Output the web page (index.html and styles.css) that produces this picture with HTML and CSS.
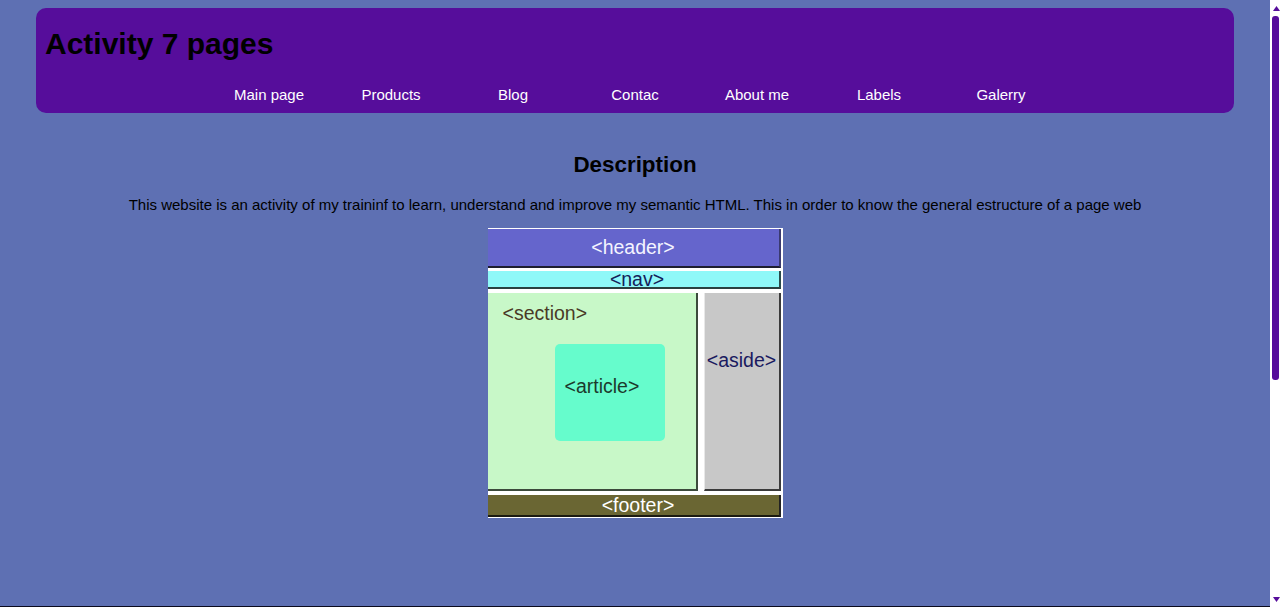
FILE: index.html
```html
<!DOCTYPE html>
<html lang="en">
<head>
<meta charset="utf-8">
<title>Activity 7 pages</title>
<link rel="stylesheet" href="styles.css">
</head>
<body>
<div class="page">
<header class="site-header">
  <h1 class="site-title">Activity 7 pages</h1>
  <nav class="site-nav">
    <ul class="nav-list">
      <li class="nav-item"><a class="nav-link" href="#">Main page</a></li>
      <li class="nav-item"><a class="nav-link" href="#">Products</a></li>
      <li class="nav-item"><a class="nav-link" href="#">Blog</a></li>
      <li class="nav-item"><a class="nav-link" href="#">Contac</a></li>
      <li class="nav-item"><a class="nav-link" href="#">About me</a></li>
      <li class="nav-item"><a class="nav-link" href="#">Labels</a></li>
      <li class="nav-item"><a class="nav-link" href="#">Galerry</a></li>
    </ul>
  </nav>
</header>
<main class="content">
  <h2 class="content-title">Description</h2>
  <p class="content-text">This website is an activity of my traininf to learn, understand and improve my semantic HTML. This in order to know the general estructure of a page web</p>
  <div class="diagram" role="img" aria-label="Semantic HTML structure">
    <div class="d-header">&lt;header&gt;</div>
    <div class="d-nav">&lt;nav&gt;</div>
    <div class="d-row">
      <div class="d-section">
        <div class="d-section-label">&lt;section&gt;</div>
        <div class="d-article">&lt;article&gt;</div>
      </div>
      <div class="d-aside">&lt;aside&gt;</div>
    </div>
    <div class="d-footer">&lt;footer&gt;</div>
  </div>
</main>
<footer class="site-footer"></footer>
</div>
<div class="scrollbar" aria-hidden="true">
  <div class="sb-button">
    <svg class="sb-arrow" width="7" height="5" viewBox="0 0 7 5"><polygon points="3.5,0 7,5 0,5" fill="#560d9b"/></svg>
  </div>
  <div class="sb-track">
    <div class="sb-thumb"></div>
  </div>
  <div class="sb-button sb-button-down">
    <svg class="sb-arrow" width="7" height="5" viewBox="0 0 7 5"><polygon points="0,0 7,0 3.5,5" fill="#560d9b"/></svg>
  </div>
</div>
</body>
</html>
```
FILE: styles.css
```css
html, body {
  height: 100%;
  margin: 0;
  overflow: hidden;
}

body {
  display: flex;
  background: #5e70b3;
  font-family: "Liberation Sans", Arial, sans-serif;
  color: #000;
}

.page {
  flex: 1;
  min-width: 0;
  height: 100%;
  overflow: hidden;
}

/* scrollbar column */
.scrollbar {
  flex: none;
  width: 10px;
  height: 100%;
  background: #fff;
  display: flex;
  flex-direction: column;
}

.sb-button {
  height: 14px;
  display: flex;
  justify-content: center;
  align-items: flex-start;
  padding-top: 6px;
  box-sizing: border-box;
}

.sb-button-down {
  align-items: flex-end;
  padding-top: 0;
  padding-bottom: 5px;
}

.sb-arrow {
  display: block;
  margin-left: 2px;
}

.sb-track {
  flex: 1;
  padding: 2px 1px 0 2px;
}

.sb-thumb {
  height: 364px;
  background: #560d9b;
  border-radius: 3px;
}

/* page */
.site-header {
  margin: 8px 36px 0;
  background: #560d9b;
  border-radius: 10px;
  padding: 18px 9px 9px;
}

.site-title {
  margin: 0 0 25px;
  font-size: 30px;
  font-weight: bold;
  line-height: 35px;
}

.nav-list {
  list-style: none;
  margin: 0;
  padding: 0;
  display: flex;
  justify-content: center;
}

.nav-item {
  width: 122px;
  text-align: center;
  font-size: 15px;
  line-height: 18px;
}

.nav-link {
  color: #fff;
  text-decoration: none;
}

.content {
  text-align: center;
}

.content-title {
  margin: 39px 0 0;
  font-size: 22.4px;
  line-height: 26px;
}

.content-text {
  margin: 18px 0 0;
  font-size: 15px;
  line-height: 17px;
}

.diagram {
  width: 293px;
  height: 289px;
  margin: 15px auto 0;
  padding: 1px 2px 0 0;
  background: #fff;
  display: flex;
  flex-direction: column;
  text-align: center;
  font-size: 19.5px;
  box-sizing: content-box;
}

.d-header {
  height: 37px;
  background: #6565cc;
  border-right: 2px solid #3a3a70;
  border-bottom: 2px solid #1e1e30;
  color: #f4f4ff;
  line-height: 37px;
}

.d-nav {
  margin-top: 3px;
  height: 16px;
  background: #8ff8f8;
  border-right: 2px solid #2a4a4a;
  border-bottom: 2px solid #2a4040;
  color: #14205a;
  line-height: 16px;
  padding-left: 8px;
}

.d-row {
  margin-top: 4px;
  height: 198px;
  display: flex;
  gap: 6px;
}

.d-section {
  width: 193px;
  background: #c8f8c8;
  border-right: 2px solid #3c4a3c;
  border-bottom: 2px solid #3c4a3c;
  padding: 9px 0 0 15px;
  text-align: left;
  color: #4a3a26;
}

.d-section-label {
  line-height: 22px;
}

.d-article {
  margin: 20px 0 0 52px;
  width: 110px;
  height: 97px;
  padding-left: 10px;
  padding-top: 31px;
  box-sizing: border-box;
  background: #66fccc;
  border-radius: 5px;
  color: #1c3a2c;
  line-height: 22px;
}

.d-aside {
  flex: 1;
  background: #c8c8c8;
  border-left: 1px solid #e8e8e8;
  border-right: 2px solid #3a3a3a;
  border-bottom: 2px solid #3a3a3a;
  padding-top: 56px;
  color: #1a1a60;
  line-height: 22px;
}

.d-footer {
  margin-top: 4px;
  height: 20px;
  background: #6a6633;
  border-right: 2px solid #222;
  border-bottom: 2px solid #1a1a10;
  color: #fff;
  line-height: 20px;
  padding-left: 10px;
}

.site-footer {
  margin-top: 88px;
  height: 362px;
  background: #0b0b1e;
}
```
